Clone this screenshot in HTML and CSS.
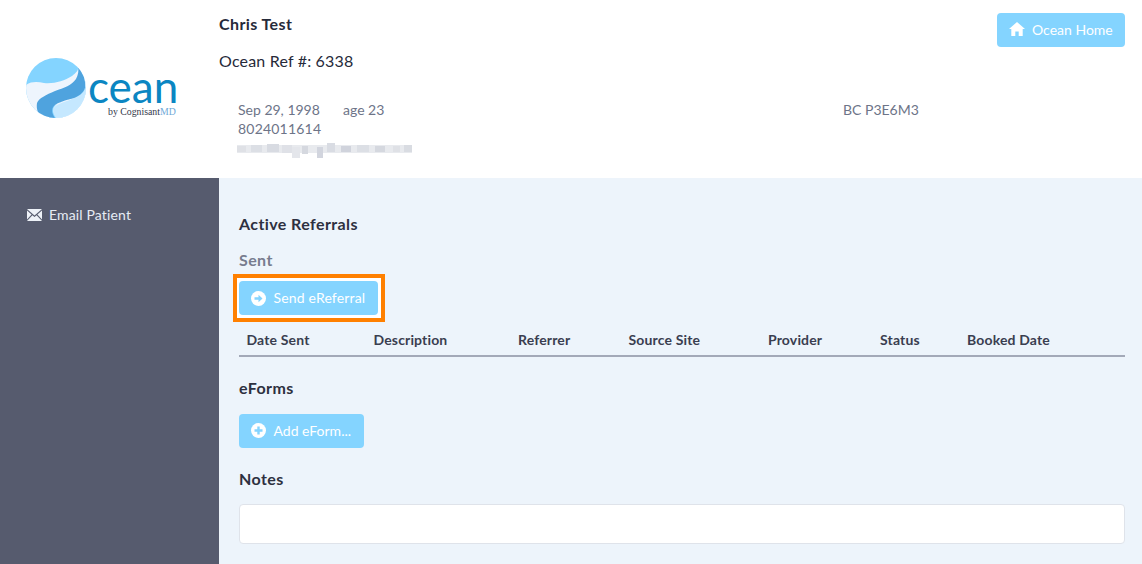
FILE: index.html
```html
<!DOCTYPE html>
<html lang="en">
<head>
<meta charset="utf-8">
<title>Ocean Patient</title>
<link rel="stylesheet" href="styles.css">
</head>
<body>
<header class="top">
  <div class="logo">
    <svg class="globe" width="60" height="60" viewBox="0 0 60 60">
      <defs><clipPath id="c"><circle cx="30" cy="30" r="30"/></clipPath></defs>
      <g clip-path="url(#c)">
        <rect width="60" height="60" fill="#84d4ff"/>
        <path d="M0 27C6 23 12 24 18 25C28 26 38 23 46 18C50 15 53 12 52 8L60 16V60H0Z" fill="#eef5fd"/>
        <path d="M29 60C25 55 26 50 31 47C38 43 47 42 53 37C57 34 59 30 60 26V60Z" fill="#c5e8ff"/>
        <path d="M27 60C23 55 24 50 29 47C36 43 46 41 52 36L60 30V28C59 33 55 37 50 39C42 42 32 43 28 49C26 52 27 56 30 60Z" fill="#84d4ff"/>
        <path d="M52 9C57 14 60 22 59 30C57 35 53 38 48 40C41 42 32 44 28 48C25 51 26 56 29 60H17C12 57 10 51 11 45C13 40 20 37 29 33C38 30 46 27 50 21C52 17 53 13 52 9Z" fill="#4fa3de"/>
      </g>
    </svg>
    <div class="wordmark">
      <span class="cean">cean</span>
      <span class="by">by Cognisant<span class="md">MD</span></span>
    </div>
  </div>
  <div class="patient">
    <div class="name">Chris Test</div>
    <div class="ref">Ocean Ref #: 6338</div>
    <div class="details">
      <div class="line">
        <span class="dob">Sep 29, 1998</span><span class="age">age 23</span><span class="postal">BC P3E6M3</span>
      </div>
      <div class="line phone">8024011614</div>
      <svg class="blur" width="175" height="16" viewBox="0 0 175 16">
        <rect y="3" width="175" height="8" fill="#e8eaee"/>
        <rect x="0" y="4" width="9" height="6" fill="#dfe1e6"/>
        <rect x="14" y="3" width="11" height="7" fill="#dcdfe5"/>
        <rect x="30" y="2" width="12" height="8" fill="#d8dbe2"/>
        <rect x="45" y="3" width="10" height="8" fill="#dfe1e7"/>
        <rect x="55" y="5" width="8" height="11" fill="#e4e6eb"/>
        <rect x="65" y="4" width="6" height="8" fill="#d5d8df"/>
        <rect x="80" y="5" width="6" height="11" fill="#d2d5de"/>
        <rect x="90" y="1" width="8" height="9" fill="#d9dce3"/>
        <rect x="104" y="4" width="10" height="6" fill="#d0d3dc"/>
        <rect x="120" y="3" width="12" height="7" fill="#dcdfe5"/>
        <rect x="138" y="4" width="10" height="6" fill="#d5d8df"/>
        <rect x="156" y="4" width="7" height="6" fill="#dfe1e6"/>
        <rect x="167" y="3" width="8" height="7" fill="#d9dce2"/>
      </svg>
    </div>
  </div>
  <a class="btn home">
    <svg width="16" height="14" viewBox="0 0 16 14"><path d="M8 0L0 7H2.3V14H6.3V9.5H9.7V14H13.7V7H16Z" fill="#fff"/></svg>
    <span>Ocean Home</span>
  </a>
</header>
<div class="body">
  <aside class="side">
    <a class="side-link">
      <svg width="15" height="12" viewBox="0 0 15 12"><path d="M0 0H15L7.5 6.5Z" fill="#eef2f8"/><path d="M0 1.5L4.6 5.5L0 10.5ZM15 1.5L10.4 5.5L15 10.5ZM5.4 6.2L7.5 8L9.6 6.2L15 12H0Z" fill="#eef2f8"/></svg>
      Email Patient
    </a>
  </aside>
  <main class="main">
    <h2 class="h-active">Active Referrals</h2>
    <h3 class="h-sent">Sent</h3>
    <div class="focus">
      <a class="btn send">
        <svg width="15" height="15" viewBox="0 0 15 15"><circle cx="7.5" cy="7.5" r="7.5" fill="#fff"/><path d="M3.5 6.3H7.5V3.8L11.5 7.5L7.5 11.2V8.7H3.5Z" fill="#84d4ff"/></svg>
        Send eReferral
      </a>
    </div>
    <div class="thead">
      <span class="c1">Date Sent</span>
      <span class="c2">Description</span>
      <span class="c3">Referrer</span>
      <span class="c4">Source Site</span>
      <span class="c5">Provider</span>
      <span class="c6">Status</span>
      <span class="c7">Booked Date</span>
    </div>
    <h2 class="h-eforms">eForms</h2>
    <a class="btn add">
      <svg width="15" height="15" viewBox="0 0 15 15"><circle cx="7.5" cy="7.5" r="7.5" fill="#fff"/><path d="M6.3 3.5H8.7V6.3H11.5V8.7H8.7V11.5H6.3V8.7H3.5V6.3H6.3Z" fill="#84d4ff"/></svg>
      Add eForm...
    </a>
    <h2 class="h-notes">Notes</h2>
    <div class="notes"></div>
  </main>
</div>
</body>
</html>
```
FILE: styles.css
```css
* { box-sizing: border-box; }
html, body { margin: 0; height: 564px; overflow: hidden; }
body { font-family: Lato, "Liberation Sans", sans-serif; font-size: 14px; color: #2d3040; background: #fff; }
.top { display: flex; height: 178px; background: #fff; }
.logo { width: 219px; flex: none; padding: 58px 0 0 26px; display: flex; align-items: flex-start; }
.globe { flex: none; }
.wordmark { display: flex; flex-direction: column; margin-left: 2px; }
.cean { font-size: 44px; line-height: 36px; color: #0b86c2; margin-top: 10px; }
.by { font-family: "Liberation Serif", serif; font-size: 9.8px; line-height: 10px; color: #33384a; margin-left: 20px; margin-top: 3px; white-space: nowrap; }
.md { color: #6fa9d8; }
.patient { flex: 1; min-width: 0; padding-top: 15px; }
.name { font-size: 16px; line-height: 18px; font-weight: 700; color: #262a3a; letter-spacing: 0.4px; }
.ref { font-size: 16px; line-height: 18px; margin-top: 19px; color: #262a3a; letter-spacing: 0.18px; }
.details { padding: 30px 0 0 19px; color: #6d7488; font-size: 14px; line-height: 19px; }
.line { display: flex; }
.phone { letter-spacing: 0.2px; }
.dob { width: 105px; }
.age { width: 500px; }
.blur { display: block; margin-top: 4px; margin-left: -1px; }
.btn { display: inline-flex; align-items: center; background: #84d4ff; color: #fff; border-radius: 4px; font-size: 14px; }
.home { flex: none; align-self: flex-start; margin: 13px 17px 0 0; height: 34px; width: 128px; padding: 0 0 2px 12px; gap: 7px; }
.body { display: flex; height: 386px; }
.side { width: 219px; flex: none; background: #565b6e; padding: 27px 0 0 27px; }
.side-link { display: flex; align-items: center; gap: 7px; color: #e6ecf5; height: 18px; font-size: 14px; letter-spacing: 0.15px; }
.side-link svg { margin-top: 2px; }
.main { flex: 1; min-width: 0; background: #edf4fb; padding: 37px 17px 0 20px; }
h2, h3 { margin: 0; font-size: 16px; line-height: 18px; font-weight: 700; color: #2d3040; letter-spacing: 0.4px; }
.h-sent { margin-top: 18px; color: #777c8e; }
.focus { margin: 5px 0 0 -6px; width: 152px; height: 48px; border: 4px solid #ff8000; padding: 3px 2px; background: #fff; }
.send { width: 139px; height: 34px; padding: 0 0 2px 12px; gap: 7.5px; letter-spacing: 0.17px; }
.send svg { margin-top: 2px; }
.thead { display: flex; align-items: center; height: 34px; margin-top: 1px; border-bottom: 2px solid #a3a9b8; font-weight: 700; color: #3a3e50; font-size: 14px; padding-left: 7.5px; letter-spacing: 0.15px; }
.thead span { flex: none; }
.c1 { width: 127px; }
.c2 { width: 144.5px; }
.c3 { width: 110.5px; }
.c4 { width: 139.5px; }
.c5 { width: 112px; }
.c6 { width: 87px; }
.h-eforms { margin-top: 22px; }
.add { margin-top: 17px; width: 125px; height: 34px; padding: 0 0 1px 12px; gap: 7.5px; }
.h-notes { margin-top: 22px; }
.notes { margin-top: 16px; height: 40px; background: #fff; border: 1px solid #dfe3ea; border-radius: 4px; }
```
